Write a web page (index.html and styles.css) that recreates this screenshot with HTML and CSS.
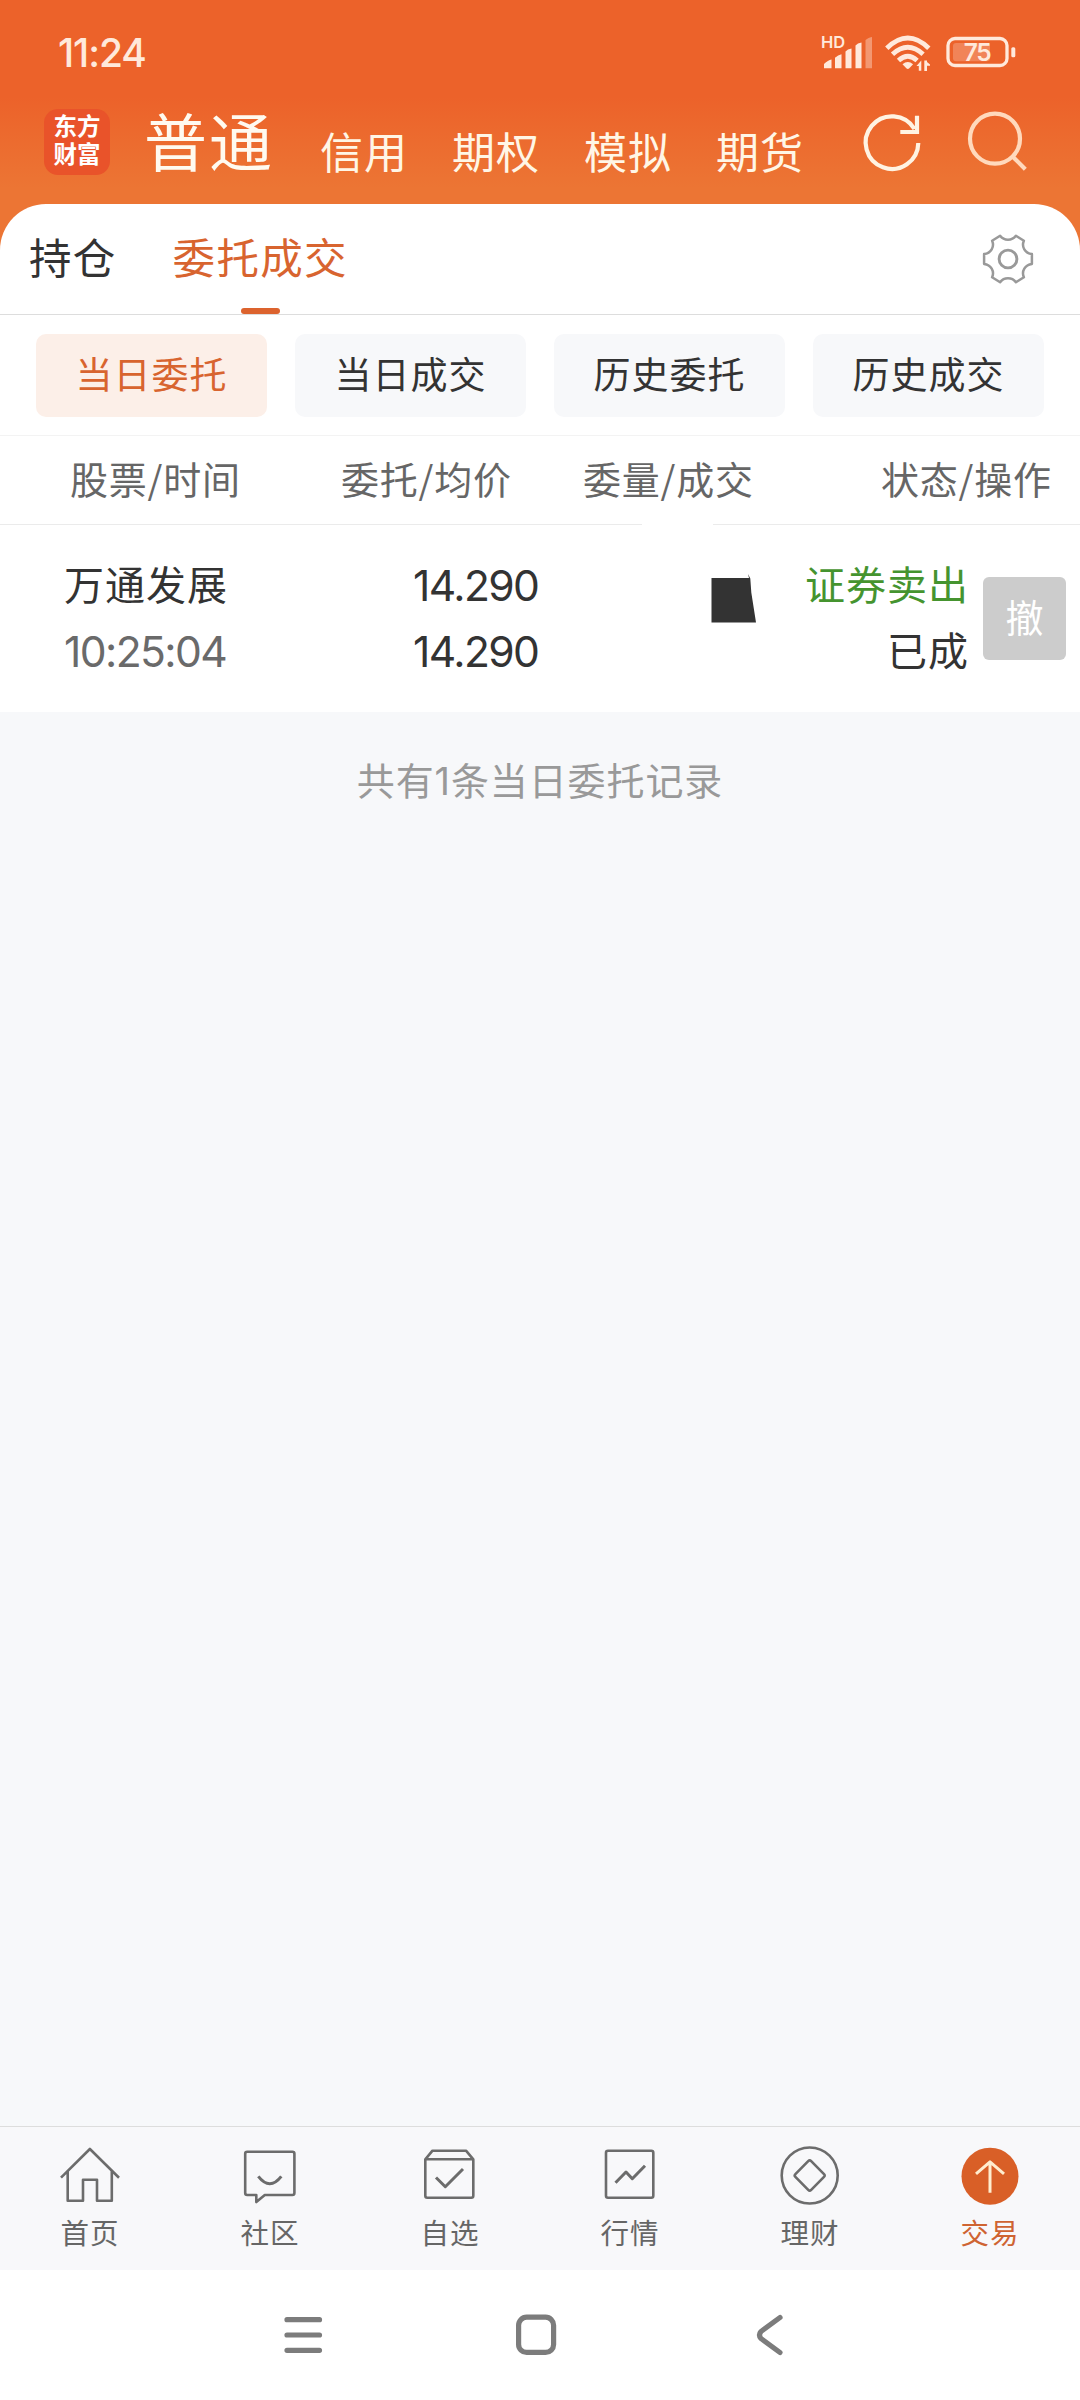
FILE: index.html
```html
<!DOCTYPE html>
<html lang="zh-CN">
<head>
<meta charset="utf-8">
<title>委托成交</title>
<link rel="stylesheet" href="styles.css">
</head>
<body>
<div class="app">
  <header class="top">
    <div class="status">
      <span class="clock">11:24</span>
      <svg class="status-icons" viewBox="820 29 200 48" width="200" height="48">
        <text x="821" y="48.200" class="hd">HD</text>
        <g fill="#ffe9db">
          <path d="M824 68.300V64q4-4 7.500-4.500v8.800zM835 68.300V57.700q3-3 6.500-3.500v14.100zM845.500 68.300V51.500q2-2.500 6-3v19.800zM855.500 68.300V45.500q2-2.500 6-3v25.800z"/>
          <path opacity=".4" d="M865.500 68.300V40.500q2-3 6.500-3.500v31.300z"/>
          <path d="M902.500 64.300q5.300-4.500 10.600 0l-3.800 4q-1.500 1.200-3 0z"/>
          <path d="M916.500 66l4.800-5.500v10.200h-2.500v-4.700zM924.300 71V60.500h2.700v1.500l3 2.500v1.200h-3v5.300z"/>
          <rect x="1011.300" y="47.200" width="4" height="10" rx="1.500"/>
          <rect x="953" y="43" width="37" height="18.300" rx="3" opacity=".26"/>
        </g>
        <g fill="none" stroke="#ffe9db" stroke-width="4.800">
          <path d="M886.800 48.200q21-20.400 42 0"/>
          <path d="M892.500 54.300q15.300-14 30.600 0"/>
          <path d="M898.500 60.600q9.300-8.600 18.600 0"/>
          <rect x="948" y="38.500" width="59" height="27" rx="7" stroke-width="3.300"/>
        </g>
        <text x="977" y="61.300" class="pct" text-anchor="middle">75</text>
      </svg>
    </div>
    <nav class="accounts">
      <div class="logo"><span>东方</span><span>财富</span></div>
      <a class="acct acct-on">普通</a>
      <a class="acct">信用</a>
      <a class="acct">期权</a>
      <a class="acct">模拟</a>
      <a class="acct">期货</a>
      <svg class="tools" viewBox="860 106 170 74" width="170" height="74" fill="none" stroke-width="4.200">
        <path stroke="#fff3e2" d="M918.300 143A26.300 26.300 0 1 1 914.500 129M917 115.700v16.300H900.300"/>
        <g stroke="#ffd9bc"><circle cx="995" cy="138.700" r="25"/><path d="M1012 155.900l13.300 13.300"/></g>
      </svg>
    </nav>
    <div class="tabs">
      <a class="tab">持仓</a>
      <a class="tab tab-on">委托成交</a>
      <svg class="gear" viewBox="-27 -27 54 54" width="54" height="54" fill="none" stroke="#999" stroke-linejoin="round">
        <circle r="8.900" stroke-width="2.900"/>
        <path stroke-width="2.500" d="M-7.900-23.200C-4-18 4-18 7.900-23.200L15.900-18.300C13.200-12.300 17-5.800 23.900-5V5C17 5.800 13.200 12.300 15.900 18.300L7.900 23.200C4 18-4 18-7.900 23.200L-15.900 18.300C-13.200 12.300-17 5.800-23.900 5V-5C-17-5.800-13.200-12.300-15.900-18.300Z"/>
      </svg>
    </div>
  </header>

  <div class="chips">
    <a class="chip chip-on">当日委托</a>
    <a class="chip">当日成交</a>
    <a class="chip">历史委托</a>
    <a class="chip">历史成交</a>
  </div>

  <div class="thead">
    <span>股票/时间</span><span>委托/均价</span><span>委量/成交</span><span>状态/操作</span>
  </div>
  <div class="rule"><i></i><i></i></div>

  <section class="order">
    <div class="name"><span>万通发展</span><span class="num time">10:25:04</span></div>
    <div class="price num"><span>14.290</span><span>14.290</span></div>
    <svg class="mask" viewBox="711 574 46 49" width="46" height="49"><path fill="#333" d="M711.500 578H749L748 574l2.300 4.500 1 14 4.700 30h-44.500z"/></svg>
    <div class="state"><span class="sell">证券卖出</span><span>已成</span></div>
    <button class="cancel">撤</button>
  </section>

  <main class="empty">共有<span class="num">1</span>条当日委托记录</main>

  <nav class="bottom">
    <a class="item"><svg viewBox="0 0 70 70"><path d="M6 37.700L34.900 9 64 37.700M12.700 31.500V60.700H28V39.700H42V60.700H56.800V31.500"/></svg>首页</a>
    <a class="item"><svg viewBox="0 0 70 70"><path d="M12.200 11.700H57.400q2 0 2 2V53q0 2-2 2H29.800L21.300 62V55H12.200q-2 0-2-2V13.700q0-2 2-2z"/><path class="mark" d="M23.300 36.300Q34.800 51 46.300 36.300"/></svg>社区</a>
    <a class="item"><svg viewBox="0 0 70 70"><path d="M10.300 19.300L17.500 10.700H51L58.300 19.300V55.700q0 2-2 2H12.300q-2 0-2-2zM10.300 19.300H58.300"/><path class="mark" d="M21 37.500L30.300 46.700 48 29"/></svg>自选</a>
    <a class="item"><svg viewBox="0 0 70 70"><rect x="11" y="10.700" width="47.300" height="47" rx="2"/><path class="mark" d="M20.500 42.700L31 32 37.300 38.700 50 25.700"/></svg>行情</a>
    <a class="item"><svg viewBox="0 0 70 70"><circle cx="34.700" cy="35.500" r="28"/><path d="M33.200 21.200q1.500-1.500 3 0L49 34.100q1.400 1.400 0 2.800L36.200 49.800q-1.500 1.500-3 0L20.400 36.900q-1.400-1.400 0-2.800z"/></svg>理财</a>
    <a class="item item-on"><svg viewBox="0 0 70 70"><circle cx="35" cy="36.200" r="28.500" fill="#d95f27" stroke="none"/><path class="mark" stroke="#ffedcf" d="M35 21.500V52.700M21 33.900L35 21.900 49 33.900"/></svg>交易</a>
  </nav>

  <footer class="sysnav">
    <svg viewBox="280 2305 510 56" width="510" height="56" fill="none" stroke="#7c7c7c" stroke-width="5.200" stroke-linecap="round" stroke-linejoin="round">
      <path d="M287 2319.700h32.500M287 2335h32.500M287 2350.300h32.500"/>
      <rect x="518.600" y="2317.200" width="35" height="35.200" rx="8"/>
      <path d="M780 2317.500L761 2331.500q-3 3.500 0 7L780 2352.500"/>
    </svg>
  </footer>
</div>
</body>
</html>
```
FILE: styles.css
```css
* { box-sizing: border-box; }
body { margin: 0; }
.app {
  width: 1080px;
  height: 2400px;
  display: flex;
  flex-direction: column;
  background: #fff;
  color: #333;
  font-family: "Noto Sans CJK SC", sans-serif;
  overflow: hidden;
}
.num, .clock { font-family: Inter, "Noto Sans CJK SC", sans-serif; }

.top { background: linear-gradient(#ec622a 0, #ec622a 97px, #ec7534 188px, #ec7534 100%); }
.status {
  height: 102px;
  padding: 4px 60px 0 58px;
  display: flex;
  align-items: center;
  justify-content: space-between;
}
.clock { font-size: 39px; font-weight: 500; line-height: 48px; letter-spacing: -1.1px; color: #ffe9db; }
.status-icons { display: block; }
.hd { font: 600 16.500px Inter, sans-serif; fill: #ffe9db; }
.pct { font: 600 24.500px Inter, sans-serif; fill: #ffe9db; letter-spacing: -1.500px; }

.accounts {
  height: 102px;
  padding: 4px 50px 0 44px;
  display: flex;
  align-items: flex-start;
}
.logo {
  width: 66px;
  height: 66px;
  margin: 3px 34px 0 0;
  padding-top: 3px;
  border-radius: 14px;
  background: #e9532a;
  color: #fff;
  font-size: 23.500px;
  font-weight: 700;
  line-height: 27.500px;
  display: flex;
  flex-direction: column;
  align-items: center;
}
.acct {
  width: 132px;
  padding-top: 16px;
  font-size: 43px;
  line-height: 56px;
  letter-spacing: 1px;
  color: #fff6e6;
  white-space: nowrap;
}
.acct-on {
  width: 176px;
  padding-top: 0;
  font-size: 63px;
  line-height: 66px;
  letter-spacing: 2px;
  color: #fffaf0;
}
.tools { flex: none; margin-left: 12px; }

.tabs {
  height: 111px;
  padding: 0 45px 0 29px;
  display: flex;
  align-items: stretch;
  background: #fff;
  border-radius: 46px 46px 0 0;
  border-bottom: 1px solid #ddd;
}
.tab {
  padding-top: 1px;
  font-size: 42.500px;
  letter-spacing: 1.300px;
  line-height: 101px;
  display: flex;
  flex-direction: column;
  align-items: center;
  margin-right: 56px;
}
.tab-on { color: #d8642f; }
.tab-on::after { content: ""; width: 39px; height: 6px; margin-top: 2px; border-radius: 3px; background: #dc632e; }
.gear { margin: 28px 0 0 auto; }

.chips {
  height: 120px;
  padding: 19px 36px 0;
  display: grid;
  grid-template-columns: repeat(4, 1fr);
  gap: 28px;
}
.chip {
  height: 83px;
  border-radius: 10px;
  background: #f7f8fa;
  font-size: 37px;
  line-height: 79px;
  letter-spacing: 1px;
  text-align: center;
}
.chip-on { background: #fcefe8; color: #d8642f; }

.thead {
  height: 89px;
  padding: 0 28px 0 70px;
  border-top: 1px solid #f3f3f3;
  display: grid;
  grid-template-columns: 271px 242px 298px auto;
  font-size: 38px;
  line-height: 83px;
  letter-spacing: .8px;
  color: #666;
  white-space: nowrap;
}
.rule { height: 1px; display: flex; justify-content: space-between; }
.rule i { width: 642px; background: #ebebeb; }
.rule i + i { width: 367px; }

.order {
  height: 187px;
  padding: 25px 14px 0 64px;
  display: flex;
  align-items: flex-start;
  line-height: 66px;
  font-size: 40px;
  letter-spacing: 1px;
  white-space: nowrap;
}
.order div { display: flex; flex-direction: column; }
.name { width: 349px; }
.order .num { font-size: 42.600px; letter-spacing: -1.600px; }
.order .time { color: #6a6a6a; padding-top: 3px; }
.order .price { width: 298px; padding-top: 3px; }
.mask { margin-top: 24px; }
.state { width: 212px; align-items: flex-end; }
.sell { color: #45942f; }
.cancel {
  width: 83px;
  height: 83px;
  margin: 27px 0 0 auto;
  padding: 0 0 6px;
  border: 0;
  border-radius: 6px;
  background: #ccc;
  color: #fff;
  font: 38px/76px "Noto Sans CJK SC", sans-serif;
}
.empty {
  flex: 1;
  padding-top: 38px;
  background: #f7f8fa;
  color: #999;
  font-size: 38px;
  line-height: 58px;
  letter-spacing: .9px;
  text-align: center;
}
.bottom {
  height: 144px;
  display: grid;
  grid-template-columns: repeat(6, 1fr);
  background: #f8f8fa;
  border-top: 1px solid #ddd;
}
.item {
  padding-top: 13px;
  display: flex;
  flex-direction: column;
  align-items: center;
  font-size: 28.500px;
  line-height: 43px;
  letter-spacing: 1px;
  color: #666;
}
.item svg { width: 70px; height: 70px; fill: none; stroke: #6c6c6c; stroke-width: 2.600px; stroke-linejoin: round; }
.item .mark { stroke-width: 3px; }
.item-on { color: #cf6432; }
.sysnav { height: 130px; padding: 35px 0 0 280px; }
```
